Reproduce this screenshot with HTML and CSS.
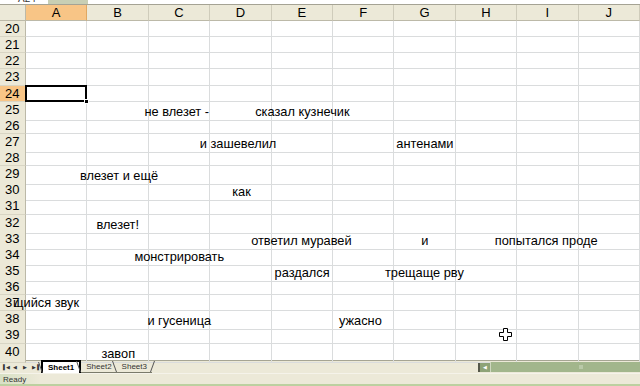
FILE: index.html
```html
<!DOCTYPE html>
<html>
<head>
<meta charset="utf-8">
<link rel="stylesheet" href="styles.css">
</head>
<body>
<div class="app">
  <div class="fbar"><span class="namebox">A24</span><span class="fxbtn"></span></div>
  <div class="sheet">
    <div class="hrow">
      <div class="corner"></div>
      <div class="ch sel">A</div><div class="ch">B</div><div class="ch">C</div><div class="ch">D</div><div class="ch">E</div>
      <div class="ch">F</div><div class="ch">G</div><div class="ch">H</div><div class="ch">I</div><div class="ch">J</div>
    </div>
    <div class="row"><div class="rh">20</div><div class="c"></div><div class="c"></div><div class="c"></div><div class="c"></div><div class="c"></div><div class="c"></div><div class="c"></div><div class="c"></div><div class="c"></div><div class="c"></div></div>
    <div class="row"><div class="rh">21</div><div class="c"></div><div class="c"></div><div class="c"></div><div class="c"></div><div class="c"></div><div class="c"></div><div class="c"></div><div class="c"></div><div class="c"></div><div class="c"></div></div>
    <div class="row"><div class="rh">22</div><div class="c"></div><div class="c"></div><div class="c"></div><div class="c"></div><div class="c"></div><div class="c"></div><div class="c"></div><div class="c"></div><div class="c"></div><div class="c"></div></div>
    <div class="row"><div class="rh">23</div><div class="c"></div><div class="c"></div><div class="c"></div><div class="c"></div><div class="c"></div><div class="c"></div><div class="c"></div><div class="c"></div><div class="c"></div><div class="c"></div></div>
    <div class="row"><div class="rh sel">24</div><div class="c active"><span class="handle"></span></div><div class="c"></div><div class="c"></div><div class="c"></div><div class="c"></div><div class="c"></div><div class="c"></div><div class="c"></div><div class="c"></div><div class="c"></div></div>
    <div class="row"><div class="rh">25</div><div class="c"></div><div class="c"><span class="t" style="padding-left:57px">не влезет -</span></div><div class="c"></div><div class="c"><span class="t" style="padding-left:45px">сказал кузнечик</span></div><div class="c"></div><div class="c"></div><div class="c"></div><div class="c"></div><div class="c"></div><div class="c"></div></div>
    <div class="row"><div class="rh">26</div><div class="c"></div><div class="c"></div><div class="c"></div><div class="c"></div><div class="c"></div><div class="c"></div><div class="c"></div><div class="c"></div><div class="c"></div><div class="c"></div></div>
    <div class="row"><div class="rh">27</div><div class="c"></div><div class="c"></div><div class="c"><span class="t" style="padding-left:51px">и зашевелил</span></div><div class="c"></div><div class="c"></div><div class="c"></div><div class="c"><span class="t" style="padding-left:2px">антенами</span></div><div class="c"></div><div class="c"></div><div class="c"></div></div>
    <div class="row"><div class="rh">28</div><div class="c"></div><div class="c"></div><div class="c"></div><div class="c"></div><div class="c"></div><div class="c"></div><div class="c"></div><div class="c"></div><div class="c"></div><div class="c"></div></div>
    <div class="row"><div class="rh">29</div><div class="c"><span class="t" style="padding-left:54px">влезет и ещё</span></div><div class="c"></div><div class="c"></div><div class="c"></div><div class="c"></div><div class="c"></div><div class="c"></div><div class="c"></div><div class="c"></div><div class="c"></div></div>
    <div class="row"><div class="rh">30</div><div class="c"></div><div class="c"></div><div class="c"></div><div class="c"><span class="t" style="padding-left:22px">как</span></div><div class="c"></div><div class="c"></div><div class="c"></div><div class="c"></div><div class="c"></div><div class="c"></div></div>
    <div class="row"><div class="rh">31</div><div class="c"></div><div class="c"></div><div class="c"></div><div class="c"></div><div class="c"></div><div class="c"></div><div class="c"></div><div class="c"></div><div class="c"></div><div class="c"></div></div>
    <div class="row"><div class="rh">32</div><div class="c"></div><div class="c"><span class="t" style="padding-left:9px">влезет!</span></div><div class="c"></div><div class="c"></div><div class="c"></div><div class="c"></div><div class="c"></div><div class="c"></div><div class="c"></div><div class="c"></div></div>
    <div class="row"><div class="rh">33</div><div class="c"></div><div class="c"></div><div class="c"></div><div class="c"><span class="t" style="padding-left:41px">ответил муравей</span></div><div class="c"></div><div class="c"></div><div class="c"><span class="t" style="padding-left:27px">и</span></div><div class="c"><span class="t" style="padding-left:39px">попытался проде</span></div><div class="c"></div><div class="c"></div></div>
    <div class="row"><div class="rh">34</div><div class="c"></div><div class="c"><span class="t" style="padding-left:47px">монстрировать</span></div><div class="c"></div><div class="c"></div><div class="c"></div><div class="c"></div><div class="c"></div><div class="c"></div><div class="c"></div><div class="c"></div></div>
    <div class="row"><div class="rh">35</div><div class="c"></div><div class="c"></div><div class="c"></div><div class="c"></div><div class="c"><span class="t" style="padding-left:3px">раздался</span></div><div class="c"><span class="t" style="padding-left:52px">трещаще рву</span></div><div class="c"></div><div class="c"></div><div class="c"></div><div class="c"></div></div>
    <div class="row"><div class="rh">36</div><div class="c"></div><div class="c"></div><div class="c"></div><div class="c"></div><div class="c"></div><div class="c"></div><div class="c"></div><div class="c"></div><div class="c"></div><div class="c"></div></div>
    <div class="row"><div class="rh">37<span class="t over">щийся звук</span></div><div class="c"></div><div class="c"></div><div class="c"></div><div class="c"></div><div class="c"></div><div class="c"></div><div class="c"></div><div class="c"></div><div class="c"></div><div class="c"></div></div>
    <div class="row"><div class="rh">38</div><div class="c"></div><div class="c"><span class="t" style="padding-left:60px">и гусеница</span></div><div class="c"></div><div class="c"></div><div class="c"></div><div class="c"><span class="t" style="padding-left:6px">ужасно</span></div><div class="c"></div><div class="c"></div><div class="c"></div><div class="c"></div></div>
    <div class="row"><div class="rh">39</div><div class="c"></div><div class="c"></div><div class="c"></div><div class="c"></div><div class="c"></div><div class="c"></div><div class="c"></div><div class="c"></div><div class="c"></div><div class="c"></div></div>
    <div class="row"><div class="rh">40</div><div class="c"></div><div class="c"><span class="t" style="padding-left:14px">завоп</span></div><div class="c"></div><div class="c"></div><div class="c"></div><div class="c"></div><div class="c"></div><div class="c"></div><div class="c"></div><div class="c"></div></div>
    <svg class="cursor" width="13" height="13" viewBox="0 0 13 13"><path d="M4.5 0.5h4v4h4v4h-4v4h-4v-4h-4v-4h4z" fill="#fff" stroke="#000"/></svg>
  </div>
  <div class="tabbar">
    <div class="navs">
      <span class="nav">&#9612;&#9664;</span><span class="nav">&#9664;</span><span class="nav">&#9654;</span><span class="nav">&#9654;&#9616;</span>
    </div>
    <div class="tabs">
      <span class="tab active">Sheet1</span><span class="tab">Sheet2</span><span class="tab">Sheet3</span><span class="tabend"></span>
    </div>
    <div class="hscroll"><span class="sbtn">&#9664;</span><span class="track"><span class="grip"></span></span></div>
  </div>
  <div class="status">Ready</div>
</div>
</body>
</html>
```
FILE: styles.css
```css
* { box-sizing: border-box; }
html, body { margin: 0; padding: 0; }
body { width: 640px; height: 386px; overflow: hidden; background: #fff; font-family: "Liberation Sans", Arial, sans-serif; }
.app { display: flex; flex-direction: column; width: 640px; height: 386px; }

.fbar { height: 5px; position: relative; background: #fff; border-bottom: 1px solid #a5a394; overflow: hidden; display: flex; }
.namebox { font-size: 10px; line-height: 10px; margin-top: -6px; padding-left: 18px; width: 48px; color: #333; }
.fxbtn { width: 40px; height: 5px; background: #c8cfb4; }

.sheet { position: relative; display: flex; flex-direction: column; }
.hrow, .row { display: grid; grid-template-columns: 26px repeat(10, 61.4px); }
.hrow { height: 16px; }
.row { height: 16.14px; }

.corner { background: #ece9d8; border-right: 1px solid #bcb9a8; border-bottom: 1px solid #bcb9a8; }
.ch { background: #ece9d8; border-right: 1px solid #cfccbb; border-bottom: 1px solid #bcb9a8; font-size: 13px; line-height: 15px; text-align: center; color: #000; }
.ch.sel { background: #f8c586; border-right-color: #e0a862; }

.rh { position: relative; background: #ece9d8; border-right: 1px solid #bcb9a8; border-bottom: 1px solid #d8d5c4; font-size: 13px; line-height: 15px; padding-left: 5px; color: #000; }
.rh.sel { background: #f8c586; }

.c { position: relative; border-right: 1px solid #dadcdd; border-bottom: 1px solid #dadcdd; white-space: nowrap; }
.t { position: relative; z-index: 1; display: inline-block; font-size: 12.8px; line-height: 15px; color: #000; white-space: nowrap; }
.over { position: absolute; left: 13px; top: 0; }

.active { border: 2px solid #000; margin: -1px 0 0 -1px; }
.handle { position: absolute; right: -4px; bottom: -4px; width: 5px; height: 5px; background: #000; border: 1px solid #fff; z-index: 2; }

.cursor { position: absolute; left: 499px; top: 323px; z-index: 3; }

.tabbar { height: 13px; display: flex; background: #ece9d8; border-top: 1px solid #a6a593; }
.navs { width: 40px; display: flex; align-items: center; padding-left: 3px; gap: 2px; }
.nav { font-size: 5px; line-height: 6px; color: #333; letter-spacing: -1px; width: 8px; }
.tabs { display: flex; align-items: flex-start; width: 438px; padding-left: 2px; }
.tab { font-size: 8px; line-height: 11px; padding: 0 5px; color: #333; border-bottom: 1px solid #7a7a6a; position: relative; }
.tab::before { content: ""; position: absolute; left: -1px; top: 0; height: 11px; border-left: 1px solid #555; transform: skewX(20deg); transform-origin: bottom; }
.tab.active { background: #fff; font-weight: bold; color: #000; border-bottom: none; }
.tabend { width: 4px; height: 11px; border-left: 1px solid #555; transform: skewX(-20deg); }
.hscroll { flex: 1; display: flex; border-left: 2px solid #55584a; margin-top: 1px; height: 10px; }
.sbtn { width: 10px; font-size: 5px; line-height: 10px; text-align: center; color: #fff; background: #8ea377; }
.track { flex: 1; position: relative; background: #a2b68c; border-left: 1px solid #cfd8c0; }
.grip { position: absolute; left: 88px; top: 3px; width: 4px; height: 4px; background: #b9c9a8; }

.status { height: 13px; font-size: 8px; line-height: 11px; padding-left: 3px; color: #333; background: linear-gradient(to right, #d7e0c4 0px, #ece9d8 40px); border-top: 1px solid #f5f3ea; border-bottom: 2px solid #bcd0a0; }
```
